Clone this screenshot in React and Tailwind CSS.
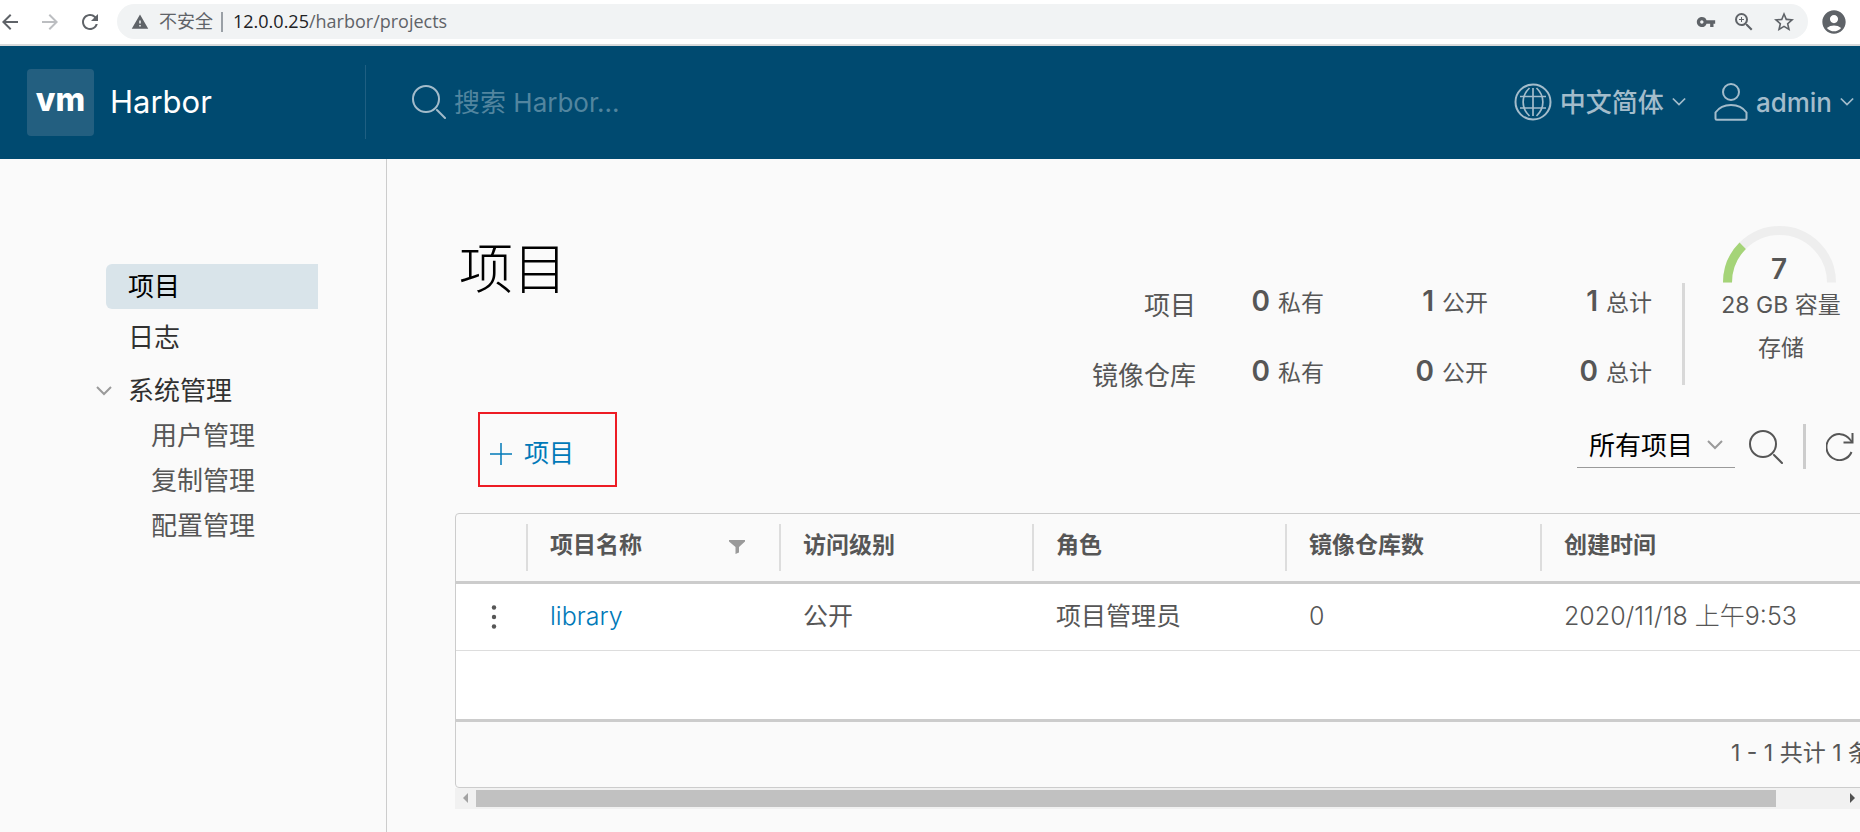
import React, { useState } from "react";
import {
  MdArrowBack,
  MdArrowForward,
  MdRefresh,
  MdWarning,
  MdVpnKey,
  MdZoomIn,
  MdStarBorder,
  MdAccountCircle,
} from "react-icons/md";

const columns = ["访问级别", "角色", "镜像仓库数"];

const stats = [
  { label: "项目", values: [0, 1, 1] },
  { label: "镜像仓库", values: [0, 0, 0] },
];
const statNames = ["私有", "公开", "总计"];

const projects = [
  {
    name: "library",
    access: "公开",
    role: "项目管理员",
    repos: 0,
    created: "2020/11/18 上午9:53",
  },
];

const Chevron = ({ className }) => (
  <svg viewBox="0 0 16 10" fill="none" stroke="currentColor" strokeWidth="2" className={className}>
    <path d="M1 1l7 7 7-7" />
  </svg>
);

const SearchIcon = ({ className }) => (
  <svg viewBox="0 0 34 34" fill="none" stroke="currentColor" strokeWidth="2" className={className}>
    <circle cx="14" cy="14" r="13" />
    <path d="M25 25l8 8" strokeLinecap="round" />
  </svg>
);

const GlobeIcon = () => (
  <svg viewBox="0 0 38 38" fill="none" stroke="currentColor" strokeWidth="2" className="size-[38px]">
    <circle cx="19" cy="19" r="17.5" />
    <path d="M19 5v28M6 13.5h26M6 25h26" strokeWidth="1.7" />
    <path d="M15.5 5C7 13 7 25 15.5 33M22.5 5C31 13 31 25 22.5 33" strokeWidth="1.7" />
  </svg>
);

const UserIcon = () => (
  <svg viewBox="0 0 34 38" fill="none" stroke="currentColor" strokeWidth="2" className="h-[38px] w-[34px]">
    <circle cx="17" cy="9" r="8" />
    <path d="M1.5 29.5C5 24.5 10.5 22 17 22s12 2.5 15.5 7.5V35.5a1.3 1.3 0 0 1-1.3 1.3H2.8a1.3 1.3 0 0 1-1.3-1.3z" />
  </svg>
);

const BrowserBar = () => (
  <div className="flex h-[46px] items-center border-b-2 border-[#d9dadb] bg-white pb-px pr-3 text-[#5f6368]">
    <button aria-label="后退" className="-ml-0.5 mr-4">
      <MdArrowBack className="size-6" />
    </button>
    <button aria-label="前进" className="mr-4 text-[#bcbec1]">
      <MdArrowForward className="size-6" />
    </button>
    <button aria-label="刷新" className="mr-[15px]">
      <MdRefresh className="size-6" />
    </button>
    <div className="flex h-[35px] flex-1 items-center rounded-full bg-[#f1f3f4] pl-3.5 pr-3">
      <MdWarning className="mr-2.5 size-[18px]" />
      <span className="text-lg">不安全</span>
      <span className="ml-2 mr-2.5 h-5 w-0.5 bg-[#9aa0a6]" />
      <span className="flex-1 font-['Open_Sans',sans-serif] text-[18px]">
        <span className="text-[#202124]">12.0.0.25</span>/harbor/projects
      </span>
      <div className="flex items-center gap-4">
        <MdVpnKey className="size-5" />
        <MdZoomIn className="size-6" />
        <MdStarBorder className="size-6" />
      </div>
    </div>
    <MdAccountCircle className="ml-3 size-7" />
  </div>
);

const Header = () => (
  <header className="flex h-[113px] items-center bg-[#004a70] pb-px text-[#a3bccb]">
    <a href="#home" className="ml-[27px] flex w-[338px] items-center gap-4">
      <span className="flex size-[67px] items-center justify-center rounded bg-[#235f80] pb-1 text-[32px] font-extrabold text-white">
        vm
      </span>
      <span className="text-[31px] text-white">Harbor</span>
    </a>
    <div className="flex h-[74px] flex-1 items-center border-l border-[#1f5f82] pl-[46px]">
      <SearchIcon className="mr-2 size-[34px]" />
      <input
        type="text"
        aria-label="搜索 Harbor"
        placeholder="搜索 Harbor..."
        className="w-80 bg-transparent text-[26px] outline-none placeholder:text-[#52859f]"
      />
    </div>
    <button className="mr-7 flex items-center gap-2 text-[26px] font-medium">
      <GlobeIcon />
      中文简体
      <Chevron className="h-2.5 w-3.5" />
    </button>
    <button className="mr-1.5 flex items-center gap-2 text-[26px] font-medium">
      <UserIcon />
      admin
      <Chevron className="h-2.5 w-3.5" />
    </button>
  </header>
);

const Sidebar = () => (
  <nav className="w-[387px] shrink-0 border-r border-[#ccc] pl-[96px] pr-[68px] pt-[105px] text-[26px] leading-[45px] text-[#565656]">
    <a href="#projects" className="ml-2.5 block rounded-l-md bg-[#d9e4ea] pl-[22px] text-black">
      项目
    </a>
    <a href="#logs" className="ml-2.5 mt-1.5 block pl-[22px] text-[#313131]">
      日志
    </a>
    <button className="mt-2 flex items-center text-[#313131]">
      <Chevron className="mr-4 h-2.5 w-4 text-[#9a9a9a]" />
      系统管理
    </button>
    <div className="pl-[55px]">
      <a href="#users" className="block">用户管理</a>
      <a href="#replications" className="block">复制管理</a>
      <a href="#configs" className="block">配置管理</a>
    </div>
  </nav>
);

const Statistics = () => (
  <div className="flex items-start text-[#565656]">
    <div className="mt-11">
      {stats.map((row) => (
        <div key={row.label} className="flex h-[70px] items-center justify-end">
          <span className="text-[26px]">{row.label}</span>
          {row.values.map((value, i) => (
            <span
              key={statNames[i]}
              className={
                i === 0
                  ? "flex w-32 items-baseline justify-end gap-2 pb-2"
                  : "flex w-[164px] items-baseline justify-end gap-2 pb-2"
              }
            >
              <b className="text-[28px] font-semibold">{value}</b>
              <span className="text-[23px]">{statNames[i]}</span>
            </span>
          ))}
        </div>
      ))}
    </div>
    <div className="ml-[30px] mt-[57px] h-[102px] w-[3px] bg-[#d8d8d8]" />
    <div className="ml-9 flex w-[120px] flex-col items-center whitespace-nowrap text-[23px] leading-[43px]">
      <div className="relative mb-px mr-1 h-[57px] w-[113px]">
        <svg viewBox="0 0 113 57" fill="none" strokeWidth="9">
          <path d="M4.5 56.5a52 52 0 0 1 104 0" stroke="#eee" />
          <path d="M4.5 56.5A52 52 0 0 1 19.7 19.7" stroke="#a5d478" />
        </svg>
        <b className="absolute inset-x-0 bottom-0 text-center text-[28px] font-semibold leading-7">7</b>
      </div>
      <span>28 GB 容量</span>
      <span>存储</span>
    </div>
  </div>
);

const Toolbar = ({ filter, setFilter }) => (
  <div className="mb-[26px] flex h-[75px] items-start justify-between pl-[23px] pr-1.5">
    <button className="flex h-full w-[139px] items-center gap-3 border-2 border-[#ed1c24] pl-2.5 pt-2 text-[25px] text-[#0079b8]">
      <svg viewBox="0 0 22 22" stroke="currentColor" strokeWidth="1.5" className="size-[22px]">
        <path d="M11 0v22M0 11h22" />
      </svg>
      项目
    </button>
    <div className="mt-3 flex h-[45px] items-center">
      <div className="relative">
        <select
          aria-label="项目筛选"
          value={filter}
          onChange={(e) => setFilter(e.target.value)}
          className="h-[42px] w-[158px] appearance-none border-b border-[#9a9a9a] bg-transparent pb-1 pl-3 text-[26px] text-black"
        >
          <option>所有项目</option>
          <option>私有项目</option>
          <option>公开项目</option>
        </select>
        <Chevron className="pointer-events-none absolute right-3 top-3.5 h-2.5 w-4 text-[#9a9a9a]" />
      </div>
      <button aria-label="搜索" className="ml-3.5 text-[#565656]">
        <SearchIcon className="size-[34px]" />
      </button>
      <span className="ml-5 h-full w-[3px] bg-[#ccc]" />
      <button aria-label="刷新列表" className="ml-5 text-[#565656]">
        <svg viewBox="0 0 28 29" fill="none" stroke="currentColor" strokeWidth="2" className="h-[29px] w-7">
          <path d="M25.5 20A13 13 0 1 1 24 7.5L26 10" />
          <path d="M26.5 1v9.5H17.5" />
        </svg>
      </button>
    </div>
  </div>
);

const HeadCell = ({ children }) => (
  <th className="p-0 align-middle">
    <div className="flex h-[47px] items-center justify-between border-l-2 border-[#ddd] pb-1 pl-[22px] pr-[34px]">
      {children}
    </div>
  </th>
);

const ProjectTable = () => (
  <div className="overflow-hidden">
    <div className="min-w-[1473px] rounded border border-[#ccc]">
      <table className="w-full table-fixed border-collapse text-left text-[#565656]">
        <colgroup>
          <col className="w-[70px]" />
          <col className="w-[253px]" />
          <col className="w-[253px]" />
          <col className="w-[253px]" />
          <col className="w-[255px]" />
          <col />
        </colgroup>
        <thead>
          <tr className="h-[68px] border-b-3 border-[#ccc] text-[23px] font-bold">
            <th />
            <HeadCell>
              项目名称
              <svg viewBox="0 0 16 14" fill="#9a9a9a" className="mt-1 h-3.5 w-4">
                <path d="M0 0h16v1.5L10 7v5.5L6.5 14V7L0 1.5z" />
              </svg>
            </HeadCell>
            {columns.map((c) => (
              <HeadCell key={c}>{c}</HeadCell>
            ))}
            <HeadCell>创建时间</HeadCell>
          </tr>
        </thead>
        <tbody className="bg-white text-[25px]">
          {projects.map((p) => (
            <tr key={p.name} className="h-[68px] border-b border-[#ddd]">
              <td className="pl-7">
                <button aria-label="操作" className="block">
                  <svg viewBox="0 0 20 24" fill="#565656" className="h-6 w-5">
                    <circle cx="10" cy="2.5" r="2.2" />
                    <circle cx="10" cy="12" r="2.2" />
                    <circle cx="10" cy="21.5" r="2.2" />
                  </svg>
                </button>
              </td>
              <td className="pl-6 font-light">
                <a href="#library" className="text-[#0079b8]">{p.name}</a>
              </td>
              <td className="pl-6">{p.access}</td>
              <td className="pl-6">{p.role}</td>
              <td className="pl-6 font-light">{p.repos}</td>
              <td className="pl-6 font-light">{p.created}</td>
            </tr>
          ))}
        </tbody>
      </table>
      <div className="h-[68px] bg-white" />
      <div className="flex h-[68px] items-center justify-end border-t-3 border-[#ccc] pb-0.5 pr-2.5 text-[23px] text-[#565656]">
        1 - 1 共计 1 条记录
      </div>
    </div>
    <div className="flex h-[21px] items-center bg-[#f1f1f1]">
      <button aria-label="向左滚动" className="flex w-[21px] justify-center">
        <svg viewBox="0 0 5 10" fill="#a3a3a3" className="h-2.5 w-[5px]">
          <path d="M5 0v10L0 5z" />
        </svg>
      </button>
      <div className="h-[17px] flex-1 bg-[#c1c1c1]" />
      <button aria-label="向右滚动" className="flex w-[84px] justify-end pr-[5px]">
        <svg viewBox="0 0 5 10" fill="#505050" className="h-2.5 w-[5px]">
          <path d="M0 0v10l5-5z" />
        </svg>
      </button>
    </div>
  </div>
);

const App = () => {
  const [filter, setFilter] = useState("所有项目");

  return (
    <div className="flex min-h-screen flex-col bg-[#fafafa] font-['Inter','Noto_Sans_CJK_SC',sans-serif]">
      <BrowserBar />
      <Header />
      <div className="flex flex-1">
        <Sidebar />
        <main className="min-w-0 flex-1 pl-[68px]">
          <div className="flex items-start justify-between pb-0.5 pr-[19px] pt-[67px]">
            <h1 className="mt-3 pl-1 text-[54px] font-light leading-[64px] text-black">项目</h1>
            <Statistics />
          </div>
          <Toolbar filter={filter} setFilter={setFilter} />
          <ProjectTable />
        </main>
      </div>
    </div>
  );
};

export default App;
